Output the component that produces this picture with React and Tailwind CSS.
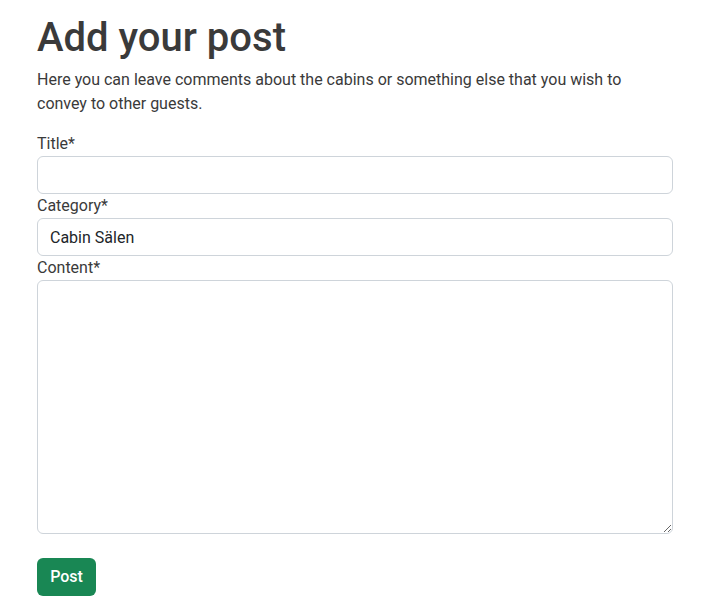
import React from "react";

const App = () => {
  return (
    <div className="min-h-screen bg-white font-['Roboto',sans-serif] text-[#212529]">
      <div className="w-[636px] ml-[37px] pt-[14px]">
        <h1 className="text-[40px] leading-[48px] font-medium text-[#3a3a3a] mb-1.5">Add your post</h1>
        <p className="text-base leading-6 text-[#3a3a3a] mb-4">
          Here you can leave comments about the cabins or something else that you wish to convey to other guests.
        </p>
        <form className="flex flex-col">
          <label className="text-base leading-6 text-[#3a3a3a]">Title*</label>
          <input
            type="text"
            className="h-[38px] w-full rounded-md border border-[#ced4da] px-3 text-base outline-none"
          />
          <label className="text-base leading-6 text-[#3a3a3a]">Category*</label>
          <input
            type="text"
            defaultValue="Cabin Sälen"
            className="h-[38px] w-full rounded-md border border-[#ced4da] px-3 text-base text-[#212529] outline-none"
          />
          <label className="text-base leading-6 text-[#3a3a3a]">Content*</label>
          <textarea className="h-[254px] w-full rounded-md border border-[#ced4da] px-3 py-1.5 text-base outline-none" />
          <div className="mt-6">
            <button
              type="button"
              className="h-[38px] w-[59px] rounded-md bg-[#198754] text-base font-medium text-white"
            >
              Post
            </button>
          </div>
        </form>
      </div>
    </div>
  );
};

export default App;
